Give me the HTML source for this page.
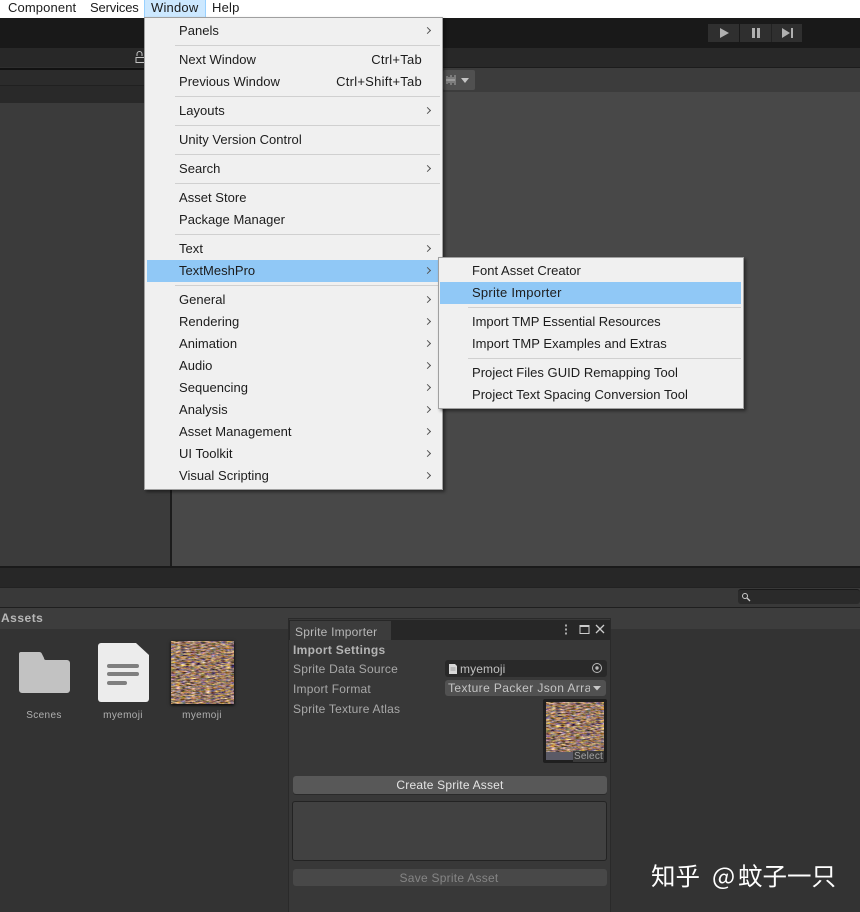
<!DOCTYPE html>
<html><head><meta charset="utf-8"><style>
html,body{margin:0;padding:0}
body{width:860px;height:912px;overflow:hidden;position:relative;background:#333;font-family:"Liberation Sans","Noto Sans CJK SC",sans-serif}
div{position:absolute}
.t{white-space:nowrap;line-height:16px;height:16px}
.m{font-size:13px;color:#1c1c1c;letter-spacing:.03px}
.k{letter-spacing:.25px}
.u{font-size:12px;letter-spacing:.2px}
.s{height:1px;background:#d0d0d0}
.ar{width:4px;height:4px;border-top:1px solid #555;border-right:1px solid #555;transform:rotate(45deg);left:425px}
</style></head><body>
<svg width="0" height="0" style="position:absolute"><defs>
<filter id="n" x="0" y="0" width="100%" height="100%" color-interpolation-filters="sRGB"><feTurbulence type="fractalNoise" baseFrequency="0.2 0.7" numOctaves="3" seed="11"/><feColorMatrix type="matrix" values="1.2 .5 .2 0 -.35  .8 .8 .2 0 -.42  .2 .5 1 0 -.45  0 0 0 0 1"/></filter>
</defs></svg>

<!-- top -->
<div style="left:0;top:0;width:860px;height:18px;background:#fff"></div>
<div style="left:144px;top:0;width:60px;height:17px;background:#cce8ff;border:1px solid #99d1ff;border-top:0"></div>
<div class="t" style="left:8px;top:0;font-size:13px;color:#1c1c1c;letter-spacing:.12px">Component</div>
<div class="t" style="left:90px;top:0;font-size:13px;color:#1c1c1c;letter-spacing:-.15px">Services</div>
<div class="t" style="left:151px;top:0;font-size:13px;color:#1c1c1c;letter-spacing:.2px">Window</div>
<div class="t" style="left:212px;top:0;font-size:13px;color:#1c1c1c;letter-spacing:.2px">Help</div>

<!-- toolbar -->
<div style="left:0;top:18px;width:860px;height:30px;background:#191919"></div>
<div style="left:708px;top:24px;width:94px;height:18px;background:#2f2f2f"></div>
<div style="left:739px;top:24px;width:1px;height:18px;background:#191919"></div>
<div style="left:771px;top:24px;width:1px;height:18px;background:#222"></div>
<svg style="position:absolute;left:708px;top:24px" width="94" height="18"><path d="M12 4l9 5-9 5z" fill="#b0b0b0"/><path d="M44 4h3v10h-3zM49 4h3v10h-3z" fill="#b0b0b0"/><path d="M74 4l8 5-8 5zM83 4h2v10h-2z" fill="#b0b0b0"/></svg>

<!-- scene -->
<div style="left:0;top:48px;width:860px;height:19px;background:#282828"></div>
<div style="left:172px;top:67px;width:688px;height:1px;background:#1c1c1c"></div>
<div style="left:172px;top:68px;width:688px;height:24px;background:#3c3c3c"></div>
<div style="left:172px;top:92px;width:688px;height:474px;background:#484848"></div>
<div style="left:443px;top:70px;width:32px;height:20px;background:#505050;border-radius:2px"></div>
<svg style="position:absolute;left:443px;top:70px" width="32" height="20"><path d="M3 10h9M4 6v8M6 7v6M8 5v10M10 7v6M12 5v10" stroke="#ccc" stroke-width=".7" fill="none"/><path d="M18 8h8l-4 5z" fill="#c4c4c4"/></svg>
<div style="left:0;top:67px;width:170px;height:1px;background:#2e2e2e"></div>
<div style="left:0;top:68px;width:170px;height:2px;background:#121212"></div>
<div style="left:0;top:70px;width:170px;height:15px;background:#2b2b2b"></div>
<div style="left:0;top:85px;width:170px;height:1px;background:#202020"></div>
<div style="left:0;top:86px;width:170px;height:17px;background:#292929"></div>
<div style="left:0;top:103px;width:170px;height:463px;background:#3b3b3b"></div>
<div style="left:170px;top:48px;width:2px;height:518px;background:#1c1c1c"></div>
<svg style="position:absolute;left:134px;top:50px" width="12" height="14"><path d="M3 6V4a2.500 2.500 0 0 1 5 0v2M2 7.500h9v5H2z" fill="none" stroke="#c4c4c4"/></svg>

<!-- project -->
<div style="left:0;top:566px;width:860px;height:2px;background:#1a1a1a"></div>
<div style="left:0;top:568px;width:860px;height:19px;background:#272727"></div>
<div style="left:0;top:587px;width:860px;height:20px;background:#393939;border-top:1px solid #222;box-sizing:border-box"></div>
<div style="left:738px;top:589px;width:122px;height:15px;background:#2a2a2a;border-radius:3px;border-top:1px solid #191919;box-sizing:border-box"></div>
<svg style="position:absolute;left:741px;top:592px" width="10" height="10"><circle cx="4" cy="4" r="2.500" fill="none" stroke="#ccc"/><path d="M6 6l3 3" stroke="#ccc" stroke-width="1.300"/></svg>
<div style="left:0;top:607px;width:860px;height:1px;background:#1f1f1f"></div>
<div style="left:0;top:608px;width:860px;height:21px;background:#3d3d3d"></div>
<div style="left:0;top:629px;width:860px;height:283px;background:#333"></div>
<div class="t" style="left:1px;top:610px;font-size:12px;font-weight:bold;color:#b8b8b8;letter-spacing:.5px">Assets</div>

<svg style="position:absolute;left:0;top:630px" width="240" height="80">
<path d="M19 24a2 2 0 0 1 2-2h18a3 3 0 0 1 3 2l2 4a2 2 0 0 0 2 2h21a3 3 0 0 1 3 3v27a3 3 0 0 1-3 3H22a3 3 0 0 1-3-3z" fill="#c2c2c2"/>
<path d="M101 13h35l13 12v44a3 3 0 0 1-3 3h-45a3 3 0 0 1-3-3V16a3 3 0 0 1 3-3z" fill="#ececec"/>
<rect x="107" y="34" width="32" height="4" rx="2" fill="#7f7f7f"/><rect x="107" y="42" width="32" height="4" rx="2" fill="#7f7f7f"/><rect x="107" y="51" width="20" height="4" rx="2" fill="#7f7f7f"/></svg>
<div style="left:171px;top:641px;width:63px;height:63px;background:#94785f;box-shadow:0 1px 3px #000"><svg width="63" height="63" style="display:block"><rect width="63" height="63" filter="url(#n)"/></svg></div>
<div class="t" style="left:4px;width:80px;text-align:center;top:708px;font-size:10px;color:#b0b0b0;letter-spacing:.35px">Scenes</div>
<div class="t" style="left:83px;width:80px;text-align:center;top:708px;font-size:10px;color:#b0b0b0;letter-spacing:.35px">myemoji</div>
<div class="t" style="left:162px;width:80px;text-align:center;top:708px;font-size:10px;color:#b0b0b0;letter-spacing:.35px">myemoji</div>

<!-- sprite importer -->
<div style="left:288px;top:618px;width:323px;height:294px;background:#383838;border:1px solid #2a2a2a;border-bottom:0;box-sizing:border-box"></div>
<div style="left:289px;top:620px;width:321px;height:20px;background:#272727"></div>
<div style="left:290px;top:621px;width:101px;height:19px;background:#3c3c3c"></div>
<div class="t" style="left:295px;top:624px;font-size:12px;color:#b8b8b8;letter-spacing:.2px">Sprite Importer</div>
<svg style="position:absolute;left:560px;top:622px" width="48" height="15"><path d="M6 2.500v2M6 6.500v2M6 10.500v2" stroke="#ccc" stroke-width="1.600"/><rect x="20" y="3.500" width="9" height="8" fill="none" stroke="#ccc"/><path d="M20 4h9" stroke="#ccc" stroke-width="2"/><path d="M36 3l8 8M44 3l-8 8" stroke="#ccc" stroke-width="1.300"/></svg>
<div class="t" style="left:293px;top:642px;font-size:12px;font-weight:bold;color:#b4b4b4;letter-spacing:.3px">Import Settings</div>
<div class="t u" style="left:293px;top:661px;color:#a8a8a8">Sprite Data Source</div>
<div class="t u" style="left:293px;top:681px;color:#a8a8a8">Import Format</div>
<div class="t u" style="left:293px;top:701px;color:#a8a8a8">Sprite Texture Atlas</div>
<div style="left:445px;top:660px;width:162px;height:17px;background:#292929;border-radius:3px"></div>
<svg style="position:absolute;left:448px;top:663px" width="10" height="12"><path d="M1 1h6l2 2v8H1z" fill="#d8d8d8"/><path d="M2.500 5h5M2.500 7h5" stroke="#888" stroke-width=".8"/></svg>
<div class="t" style="left:460px;top:661px;font-size:12px;color:#c0c0c0;letter-spacing:.1px">myemoji</div>
<svg style="position:absolute;left:590px;top:661px" width="14" height="14"><circle cx="7" cy="7" r="4.500" fill="none" stroke="#b8b8b8"/><circle cx="7" cy="7" r="1.700" fill="#b8b8b8"/></svg>
<div style="left:445px;top:680px;width:161px;height:16px;background:#515151;border-radius:3px"></div>
<div class="t" style="left:448px;top:680px;width:142px;overflow:hidden;font-size:12px;color:#c4c4c4;letter-spacing:.4px">Texture Packer Json Array</div>
<svg style="position:absolute;left:593px;top:686px" width="9" height="5"><path d="M0 0h8L4 4.500z" fill="#c8c8c8"/></svg>
<div style="left:543px;top:699px;width:64px;height:64px;background:#1f1f1f;border-radius:2px"></div>
<div style="left:546px;top:702px;width:58px;height:58px;background:#8f7664"><svg width="58" height="58" style="display:block"><rect width="58" height="58" filter="url(#n)"/></svg></div>
<div style="left:546px;top:752px;width:27px;height:8px;background:#5a5a66"></div>
<div style="left:573px;top:751px;width:31px;height:11px;background:#3a3a3a"></div>
<div class="t" style="left:574px;top:749px;font-size:10px;color:#a4a4a4;letter-spacing:.2px">Select</div>
<div style="left:293px;top:776px;width:314px;height:18px;background:#585858;border-radius:3px;box-shadow:0 1px 0 #2a2a2a"></div>
<div class="t" style="left:293px;top:777px;width:314px;text-align:center;font-size:12px;color:#e4e4e4;letter-spacing:.2px">Create Sprite Asset</div>
<div style="left:292px;top:801px;width:315px;height:60px;box-sizing:border-box;background:#414141;border:1px solid #232323;border-radius:3px"></div>
<div style="left:293px;top:869px;width:314px;height:17px;background:#484848;border-radius:3px"></div>
<div class="t" style="left:293px;top:870px;width:312px;text-align:center;font-size:12px;color:#858585;letter-spacing:.25px">Save Sprite Asset</div>

<!-- window menu -->
<div style="left:144px;top:17px;width:299px;height:473px;box-sizing:border-box;background:#f0f0f0;border:1px solid #a0a0a0;box-shadow:2px 2px 3px rgba(0,0,0,.45)"></div>
<div style="left:147px;top:260px;width:293px;height:22px;background:#90c8f6"></div>
<div class="s" style="left:175px;top:45px;width:265px"></div>
<div class="s" style="left:175px;top:96px;width:265px"></div>
<div class="s" style="left:175px;top:125px;width:265px"></div>
<div class="s" style="left:175px;top:154px;width:265px"></div>
<div class="s" style="left:175px;top:183px;width:265px"></div>
<div class="s" style="left:175px;top:234px;width:265px"></div>
<div class="s" style="left:175px;top:285px;width:265px"></div>
<div class="t m" style="left:179px;top:23px">Panels</div><div class="ar" style="top:28px"></div>
<div class="t m" style="left:179px;top:52px">Next Window</div><div class="t m k" style="right:438px;top:52px">Ctrl+Tab</div>
<div class="t m" style="left:179px;top:74px">Previous Window</div><div class="t m k" style="right:438px;top:74px">Ctrl+Shift+Tab</div>
<div class="t m" style="left:179px;top:103px">Layouts</div><div class="ar" style="top:108px"></div>
<div class="t m" style="left:179px;top:132px">Unity Version Control</div>
<div class="t m" style="left:179px;top:161px">Search</div><div class="ar" style="top:166px"></div>
<div class="t m" style="left:179px;top:190px">Asset Store</div>
<div class="t m" style="left:179px;top:212px">Package Manager</div>
<div class="t m" style="left:179px;top:241px">Text</div><div class="ar" style="top:246px"></div>
<div class="t m" style="left:179px;top:263px">TextMeshPro</div><div class="ar" style="top:268px"></div>
<div class="t m" style="left:179px;top:292px">General</div><div class="ar" style="top:297px"></div>
<div class="t m" style="left:179px;top:314px">Rendering</div><div class="ar" style="top:319px"></div>
<div class="t m" style="left:179px;top:336px">Animation</div><div class="ar" style="top:341px"></div>
<div class="t m" style="left:179px;top:358px">Audio</div><div class="ar" style="top:363px"></div>
<div class="t m" style="left:179px;top:380px">Sequencing</div><div class="ar" style="top:385px"></div>
<div class="t m" style="left:179px;top:402px">Analysis</div><div class="ar" style="top:407px"></div>
<div class="t m" style="left:179px;top:424px">Asset Management</div><div class="ar" style="top:429px"></div>
<div class="t m" style="left:179px;top:446px">UI Toolkit</div><div class="ar" style="top:451px"></div>
<div class="t m" style="left:179px;top:468px">Visual Scripting</div><div class="ar" style="top:473px"></div>

<!-- submenu -->
<div style="left:438px;top:257px;width:306px;height:152px;box-sizing:border-box;background:#f0f0f0;border:1px solid #a0a0a0;box-shadow:2px 2px 3px rgba(0,0,0,.45)"></div>
<div style="left:440px;top:282px;width:301px;height:22px;background:#90c8f6"></div>
<div class="s" style="left:468px;top:307px;width:273px"></div>
<div class="s" style="left:468px;top:358px;width:273px"></div>
<div class="t m" style="left:472px;top:263px">Font Asset Creator</div>
<div class="t m" style="left:472px;top:285px;letter-spacing:.25px">Sprite Importer</div>
<div class="t m" style="left:472px;top:314px;letter-spacing:-.03px">Import TMP Essential Resources</div>
<div class="t m" style="left:472px;top:336px">Import TMP Examples and Extras</div>
<div class="t m" style="left:472px;top:365px">Project Files GUID Remapping Tool</div>
<div class="t m" style="left:472px;top:387px">Project Text Spacing Conversion Tool</div>

<!-- watermark -->
<div class="t" style="left:651px;top:860px;height:32px;line-height:32px;font-size:24.500px;color:#fff;font-family:'Noto Sans CJK SC',sans-serif">知乎</div>
<div class="t" style="left:712px;top:860px;height:32px;line-height:32px;font-size:24.500px;color:#fff;font-family:'Noto Sans CJK SC',sans-serif">@</div>
<div class="t" style="left:738px;top:860px;height:32px;line-height:32px;font-size:24.500px;color:#fff;font-family:'Noto Sans CJK SC',sans-serif">蚊子一只</div>
</body></html>
